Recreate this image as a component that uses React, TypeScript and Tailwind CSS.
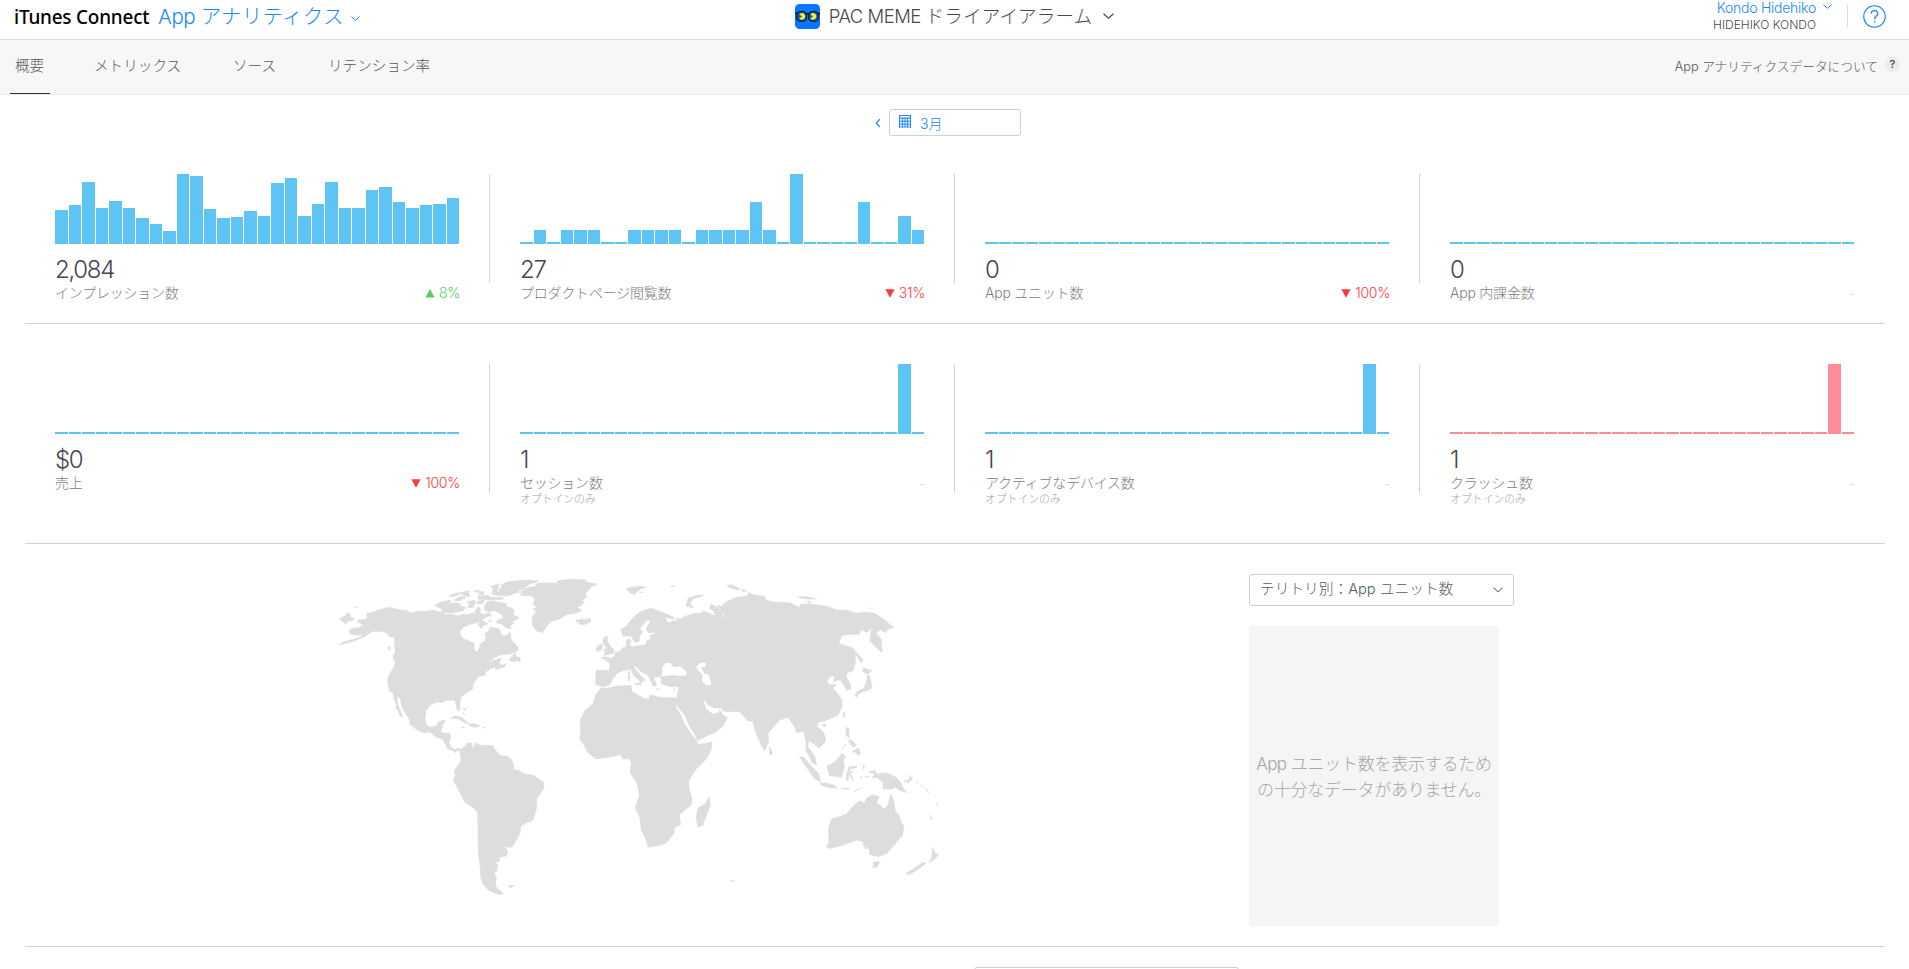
import React from "react";

const jp = "font-['Inter','Noto_Sans_CJK_JP',sans-serif] font-light";

const impressions = [34, 39, 62, 36, 43, 36, 26, 20, 13, 70, 68, 35, 26, 27, 33, 28, 61, 66, 28, 40, 62, 36, 36, 54, 57, 42, 36, 39, 40, 46];
const pageViews = [2, 14, 2, 14, 14, 14, 2, 2, 14, 14, 14, 14, 2, 14, 14, 14, 14, 42, 14, 2, 70, 2, 2, 2, 2, 42, 2, 2, 28, 14];
const flat = Array<number>(30).fill(2);
const spike = flat.map((v, i) => (i === 28 ? 70 : v));

type Metric = {
  value: string;
  label: string;
  note?: string;
  bars: number[];
  change?: { dir: "up" | "down"; text: string };
  red?: boolean;
};

const rowOne: Metric[] = [
  { value: "2,084", label: "インプレッション数", bars: impressions, change: { dir: "up", text: "8%" } },
  { value: "27", label: "プロダクトページ閲覧数", bars: pageViews, change: { dir: "down", text: "31%" } },
  { value: "0", label: "App ユニット数", bars: flat, change: { dir: "down", text: "100%" } },
  { value: "0", label: "App 内課金数", bars: flat },
];

const rowTwo: Metric[] = [
  { value: "$0", label: "売上", bars: flat, change: { dir: "down", text: "100%" } },
  { value: "1", label: "セッション数", note: "オプトインのみ", bars: spike },
  { value: "1", label: "アクティブなデバイス数", note: "オプトインのみ", bars: spike },
  { value: "1", label: "クラッシュ数", note: "オプトインのみ", bars: spike, red: true },
];

function Chevron({ className, w = 10 }: { className?: string; w?: number }) {
  return (
    <svg width={w} height={w * 0.6} viewBox="0 0 10 6" fill="none" stroke="currentColor" strokeWidth="1.1" className={className}>
      <path d="M0.5 0.7 L5 4.8 L9.5 0.7" />
    </svg>
  );
}

function BarChart({ bars, red }: { bars: number[]; red?: boolean }) {
  return (
    <svg width="404" height="70" viewBox="0 0 404 70" shapeRendering="crispEdges" className={red ? "block fill-[#fc8d98]" : "block fill-[#5ec4f3]"}>
      {bars.map((h, i) => (
        <rect key={i} x={Math.ceil(i * 13.5)} y={70 - h} width={i % 2 ? 12 : 13} height={h} />
      ))}
    </svg>
  );
}

function MetricCard({ m, last, tall }: { m: Metric; last: boolean; tall?: boolean }) {
  return (
    <div className="flex w-[465px] shrink-0 justify-between pl-[30px]">
      <div className="w-[404px]">
        <BarChart bars={m.bars} red={m.red} />
        <div className="mt-3 h-[27px] text-[24px] leading-7 tracking-[-1.3px] text-[#43474d]">{m.value}</div>
        <div className="flex h-5 items-center justify-between text-[14px] leading-5 text-[#808080]">
          <span className="whitespace-nowrap tracking-[-0.22px]">{m.label}</span>
          {m.change ? (
            <span className={m.change.dir === "up" ? "-mr-px flex items-center gap-1 text-[#4fd163]" : "-mr-px flex items-center gap-1 text-[#fb3b3b]"}>
              <svg width="10" height="9" viewBox="0 0 10 9" fill="currentColor">
                <path d={m.change.dir === "up" ? "M5 0 L9.6 8.6 H0.4 Z" : "M0.4 0.2 H9.6 L5 8.8 Z"} />
              </svg>
              <span className="tracking-[-0.3px]">{m.change.text}</span>
            </span>
          ) : (
            <span className="font-['Liberation_Sans',sans-serif] text-[11px] text-[#d0d0d0]">-</span>
          )}
        </div>
        {m.note && <div className="h-3 text-[11px] leading-3 tracking-[-0.2px] text-[#a6a6a6]">{m.note}</div>}
      </div>
      {!last && <div className={tall ? "h-[129px] w-px bg-[#d3d3d3]" : "h-[109px] w-px bg-[#d3d3d3]"} />}
    </div>
  );
}

const americas = [
  "M27 254 L45 244 L70 238 L92 230 L100 222 L85 226 L62 222 L57 212 L64 205 L85 204 L100 194 L82 186 L84 180 L106 178 L112 172 L110 160 L130 156 L150 148 L178 142 L208 149 L228 151 L245 158 L268 153 L292 154 L308 150 L320 154 L340 158 L345 163 L362 162 L385 168 L400 162 L412 164 L430 158 L436 166 L436 150 L444 140 L452 146 L450 158 L460 164 L476 158 L486 166 L468 172 L456 180 L442 188 L420 193 L400 202 L390 214 L392 228 L402 237 L418 243 L433 250 L432 265 L437 277 L446 270 L450 252 L464 244 L468 234 L463 222 L476 212 L480 202 L497 204 L508 206 L512 218 L520 228 L532 226 L540 216 L544 240 L556 252 L565 264 L562 274 L540 282 L514 284 L496 292 L474 308 L490 302 L505 296 L514 296 L508 308 L516 316 L528 310 L524 320 L498 329 L494 320 L480 328 L466 336 L466 345 L446 350 L440 358 L430 370 L428 388 L408 400 L392 412 L390 430 L390 448 L386 455 L380 448 L376 424 L368 420 L345 422 L338 428 L322 426 L300 436 L288 452 L285 478 L290 496 L302 502 L318 498 L328 484 L347 480 L340 492 L332 516 L346 520 L358 519 L362 530 L357 550 L364 562 L374 568 L386 564 L392 568 L406 558 L410 550 L424 548 L430 566 L436 548 L448 554 L462 556 L488 556 L494 568 L510 586 L530 588 L544 598 L552 616 L550 628 L568 632 L586 642 L610 646 L626 656 L640 666 L642 684 L632 700 L620 718 L620 744 L612 772 L606 784 L588 788 L572 800 L570 820 L558 842 L546 862 L534 862 L522 858 L534 874 L530 888 L508 892 L510 904 L496 906 L504 916 L500 934 L492 940 L500 952 L496 970 L500 984 L520 1000 L508 1004 L490 998 L472 988 L458 970 L452 950 L450 918 L446 890 L444 850 L444 800 L442 756 L430 744 L404 726 L392 702 L378 676 L369 660 L376 646 L372 632 L388 612 L393 600 L390 576 L384 570 L376 578 L368 572 L352 566 L346 552 L338 538 L318 532 L308 522 L298 516 L284 520 L262 510 L238 492 L240 480 L226 460 L216 440 L210 414 L202 412 L202 425 L210 450 L218 468 L212 470 L204 452 L196 442 L200 434 L192 420 L190 400 L178 392 L172 360 L180 340 L192 322 L196 306 L188 290 L195 280 L193 232 L178 230 L170 218 L148 214 L128 214 L100 232 L64 246 L36 253Z",
  "M28 178 L40 170 L55 158 L62 164 L58 170 L72 174 L68 182 L54 184 L48 192 L36 184Z",
  "M74 142 L84 141 L82 144Z",
  "M112 212 L128 210 L124 216 L110 222Z",
  "M174 262 L180 258 L181 270 L176 272Z",
  "M188 282 L200 288 L208 294 L206 304 L200 296Z",
  "M312 138 L330 126 L360 120 L364 126 L344 134 L366 130 L386 128 L396 140 L406 142 L402 150 L394 154 L370 158 L340 158 L332 152 L342 148 L326 144 L322 138Z",
  "M356 108 L382 98 L392 102 L376 108 L362 110Z",
  "M380 114 L398 108 L408 112 L390 122 L372 122Z",
  "M388 98 L418 92 L416 100 L420 110 L402 106Z",
  "M410 126 L434 120 L436 130 L428 144 L412 142 L418 134Z",
  "M440 124 L462 120 L460 130 L442 132Z",
  "M430 92 L450 90 L442 98Z M448 96 L462 94 L462 103 L446 104Z",
  "M444 108 L476 106 L480 112 L520 112 L518 118 L480 120 L446 118Z",
  "M482 80 L500 74 L510 72 L506 78 L500 96 L486 94 L490 86Z",
  "M462 140 L470 126 L490 122 L510 128 L528 130 L530 140 L546 144 L554 152 L550 164 L566 172 L560 180 L546 184 L552 190 L540 198 L544 206 L530 204 L518 194 L498 188 L504 178 L520 176 L516 164 L494 152 L476 156 L464 150Z",
  "M444 192 L456 180 L466 186 L474 192 L458 198 L454 206Z",
  "M476 180 L486 182 L480 186Z",
  "M486 98 L510 94 L506 88 L516 82 L514 74 L530 66 L560 62 L600 60 L628 64 L600 72 L582 84 L566 90 L560 98 L532 108 L500 106 L484 102Z",
  "M564 96 L590 90 L570 88 L620 78 L616 72 L640 68 L678 70 L684 62 L720 57 L770 60 L766 66 L802 72 L784 80 L778 90 L766 98 L770 112 L752 122 L764 124 L756 134 L742 142 L756 150 L742 158 L710 164 L688 178 L664 184 L648 200 L638 218 L618 212 L608 196 L606 170 L620 154 L608 148 L622 142 L610 134 L614 118 L604 108 L568 106 L580 100Z",
  "M738 178 L746 182 L750 176 L762 180 L780 174 L784 184 L764 194 L746 192 L748 186 L738 186Z",
  "M536 300 L556 278 L558 290 L570 292 L571 307 L562 302 L552 305Z",
  "M360 476 L376 468 L396 472 L406 482 L418 490 L406 490 L392 480 L374 474Z",
  "M414 494 L430 490 L450 498 L434 502 L426 500Z M394 501 L405 502 L398 505Z M458 501 L467 502 L460 505Z",
  "M398 444 L408 446 L406 452Z M400 455 L404 464 L401 464Z",
  "M536 976 L552 977 L548 981 L538 984Z",
];

const oldWorld = [
  "M122 294 L134 290 L146 292 L150 296 L162 290 L166 278 L182 272 L186 264 L200 260 L198 240 L208 236 L214 244 L208 250 L214 260 L232 258 L256 254 L262 240 L272 238 L270 226 L296 218 L264 218 L258 206 L272 184 L260 180 L240 206 L248 216 L240 226 L238 244 L224 248 L214 228 L188 228 L182 208 L200 198 L220 172 L240 156 L272 144 L290 150 L320 162 L342 172 L340 178 L314 172 L324 190 L340 182 L352 184 L346 174 L362 178 L372 170 L396 162 L426 158 L430 152 L466 168 L460 152 L448 146 L452 132 L470 140 L486 156 L490 176 L492 162 L480 148 L472 136 L498 142 L486 136 L498 126 L530 112 L560 108 L566 98 L580 104 L612 108 L618 120 L640 126 L690 128 L716 142 L722 132 L754 132 L800 138 L830 150 L860 150 L890 160 L912 156 L944 160 L972 178 L990 194 L1002 202 L984 208 L978 218 L960 210 L948 218 L964 238 L967 278 L950 264 L930 242 L934 204 L920 218 L904 208 L900 222 L846 226 L836 250 L860 258 L874 262 L886 280 L886 306 L880 332 L862 338 L858 352 L870 368 L873 388 L860 390 L850 372 L842 362 L830 360 L820 368 L824 350 L814 348 L800 362 L808 374 L830 374 L818 384 L836 404 L847 422 L846 440 L834 466 L810 476 L794 484 L776 486 L770 498 L790 516 L796 530 L796 546 L776 566 L762 552 L746 542 L744 560 L752 572 L764 588 L770 616 L756 608 L748 590 L737 570 L738 544 L730 514 L710 518 L704 500 L684 472 L660 480 L640 502 L624 520 L626 546 L614 572 L604 556 L584 510 L578 484 L564 484 L540 456 L490 454 L484 444 L462 444 L444 436 L436 422 L430 424 L440 448 L458 462 L472 460 L480 450 L488 464 L502 474 L490 498 L464 518 L440 528 L412 542 L406 526 L388 498 L376 468 L354 440 L354 426 L350 440 L342 424 L348 442 L362 464 L374 492 L388 514 L408 540 L414 554 L456 546 L454 568 L440 596 L406 630 L386 664 L388 690 L396 712 L394 734 L358 764 L362 794 L344 802 L342 820 L320 848 L300 856 L264 862 L258 840 L244 810 L240 776 L226 744 L238 706 L232 672 L210 638 L214 606 L206 596 L190 598 L180 584 L146 592 L108 597 L82 576 L74 558 L58 536 L62 520 L60 482 L74 452 L100 430 L106 406 L124 382 L132 386 L170 378 L214 376 L216 394 L250 414 L266 418 L270 404 L300 412 L350 414 L357 380 L330 380 L304 372 L302 350 L340 346 L380 346 L380 336 L362 320 L340 316 L326 308 L314 316 L306 340 L300 350 L282 352 L290 376 L280 380 L264 346 L244 336 L226 318 L222 322 L238 342 L256 360 L246 364 L242 376 L236 372 L240 362 L222 348 L212 328 L188 332 L172 340 L156 360 L150 374 L130 380 L106 374 L108 330 L146 332 L150 312 L134 298Z",
  "M130 272 L140 264 L130 252 L128 240 L136 228 L144 232 L142 244 L154 262 L164 270 L160 280 L144 284 L130 286 L136 278Z",
  "M108 274 L112 258 L126 252 L128 262 L122 272Z",
  "M198 86 L212 82 L240 78 L260 82 L240 88 L222 104 L210 98Z M238 96 L250 96 L244 99Z",
  "M330 79 L346 77 L340 81Z",
  "M378 138 L384 114 L408 106 L430 104 L428 108 L400 116 L390 130 L400 144Z",
  "M500 76 L516 74 L540 86 L532 90 L510 84Z M544 88 L562 92 L550 96Z",
  "M712 110 L740 110 L770 116 L750 118 L722 114Z M742 124 L756 126 L744 130Z",
  "M926 143 L932 145 L928 147Z",
  "M204 336 L209 334 L209 344 L205 344Z M204 348 L210 348 L209 362 L204 362Z M222 370 L236 370 L234 376Z M288 386 L302 388 L292 389Z M338 388 L346 386 L342 392Z",
  "M876 262 L892 280 L908 298 L906 310 L896 298 L886 280Z",
  "M910 322 L922 328 L936 330 L926 342 L914 338 L908 334Z",
  "M922 342 L930 350 L936 384 L922 392 L906 396 L892 404 L890 414 L884 404 L892 394 L910 386 L916 374 L920 364Z",
  "M848 462 L854 454 L854 474Z M786 494 L798 492 L794 502Z M628 560 L636 572 L636 584 L628 584Z",
  "M858 502 L868 506 L866 524 L870 536 L858 526Z M864 540 L878 542 L890 556 L882 562 L870 552Z M876 574 L896 564 L901 578 L896 588 L888 578Z M846 568 L858 552 L856 558Z",
  "M718 590 L732 592 L750 614 L776 640 L782 666 L764 656 L744 628Z",
  "M780 668 L800 670 L820 674 L834 684 L812 684 L784 676Z M844 684 L870 686 L856 688Z M882 696 L904 684 L888 690Z",
  "M800 618 L812 614 L828 602 L846 580 L858 592 L850 600 L854 620 L844 652 L808 646Z",
  "M862 632 L868 620 L892 618 L888 624 L868 628 L868 636 L880 632 L872 642 L882 664 L872 652 L866 644 L864 664 L858 656Z",
  "M908 612 L914 618 L910 630Z M900 650 L908 651 L902 653Z M914 648 L928 649 L920 651Z",
  "M926 636 L944 630 L950 642 L966 640 L980 638 L1012 654 L1024 670 L1030 686 L1042 698 L1020 692 L1006 682 L994 688 L968 686 L970 668 L950 652 L936 654 L944 642Z",
  "M1030 664 L1050 658 L1046 646 L1058 656 L1046 668Z M1068 664 L1074 670 L1070 668Z M1080 674 L1090 680 L1084 678Z M1096 682 L1108 700 L1098 690Z M1130 728 L1134 740 L1131 736Z M1106 764 L1118 778 L1112 776Z",
  "M798 858 L806 850 L806 802 L814 778 L860 762 L874 744 L898 722 L914 728 L920 714 L936 704 L958 710 L950 728 L974 748 L984 734 L992 702 L1002 724 L1006 754 L1018 766 L1022 784 L1032 800 L1028 826 L1008 848 L982 880 L958 890 L930 884 L926 864 L914 866 L926 852 L912 862 L908 846 L890 840 L848 856 L808 866Z",
  "M940 906 L960 906 L952 920 L940 924Z",
  "M1118 862 L1126 880 L1136 884 L1118 902 L1106 908 L1116 890Z",
  "M1038 940 L1060 926 L1090 906 L1098 910 L1072 930 L1048 944Z",
  "M514 960 L524 962 L514 966Z",
  "M408 772 L414 744 L436 732 L446 710 L452 732 L440 766 L428 796 L414 802Z",
];

const caspian = "M408 322 L420 308 L438 308 L436 320 L424 322 L432 340 L446 344 L450 356 L454 376 L438 376 L426 362 L428 346 L416 332Z";
const blackSea = "M308 342 L306 322 L316 310 L332 310 L344 320 L362 320 L380 336 L378 346 L354 348 L338 340 L318 344Z";

function WorldMap() {
  return (
    <svg width="620" height="350" viewBox="0 0 1860 1050" className="block fill-[#dddddd] stroke-[#dddddd]" strokeWidth="1.5">
      {americas.map((d) => (
        <path key={d} d={d} />
      ))}
      <g transform="translate(690 0)">
        {oldWorld.map((d) => (
          <path key={d} d={d} />
        ))}
        <path d={caspian} className="fill-white stroke-none" />
        <path d={blackSea} className="fill-white stroke-none" />
        <path d="M332 316 L344 316 L346 308 L364 306 L356 318 L342 321Z" />
      </g>
    </svg>
  );
}

function AppIcon() {
  return (
    <svg width="25" height="25" viewBox="0 0 25 25">
      <rect width="25" height="25" rx="4.5" fill="#0a75fb" />
      <g fill="#0b5fd0" stroke="#101820" strokeWidth="1.3">
        <rect x="1.7" y="7.6" width="9.6" height="9.6" rx="3.8" />
        <rect x="13.7" y="7.6" width="9.6" height="9.6" rx="3.8" />
        <path d="M0 9.5 H2 M11 10.5 Q12.5 9 14 10.5 M23 9.5 H25" fill="none" />
      </g>
      <path d="M7 12.4 L4.4 10.4 A3.3 3.3 0 1 1 4.4 14.4 Z M18 12.4 L15.4 10.4 A3.3 3.3 0 1 1 15.4 14.4 Z" fill="#f3f01c" />
    </svg>
  );
}

function CalendarIcon() {
  return (
    <svg width="12" height="13" viewBox="0 0 12 13" fill="none" stroke="#1a86fb">
      <path d="M0 0.5 H12 M0 3.2 H12" strokeWidth="1.2" />
      <path d="M0.5 0 V12.5 M11.5 0 V12.5 M0 12 H12 M3.4 3 V12 M6 3 V12 M8.6 3 V12 M0 6.2 H12 M0 9.2 H12" />
    </svg>
  );
}

export default function App() {
  return (
    <div className={`h-[969px] w-[1909px] overflow-hidden bg-white ${jp}`}>
      <header className="flex h-10 justify-between border-b border-[#dcdcdc]">
        <div className="flex w-[600px] pl-[14px]">
          <div className="h-[34px] w-[135px] whitespace-nowrap">
            <span className="inline-block origin-left scale-x-[0.995] font-['Noto_Sans',sans-serif] text-[19px] leading-[34px] font-medium tracking-[-0.2px] text-black">iTunes Connect</span>
          </div>
          <div className="flex items-start pl-[9px] text-[#1a86fb]">
            <span className="text-[20.5px] leading-[33px] tracking-[0.25px] whitespace-nowrap">
              <span className="tracking-[-0.4px]">App </span>アナリティクス
            </span>
            <Chevron className="mt-[16px] ml-[7px]" w={9} />
          </div>
        </div>
        <div className="flex items-start pt-1">
          <AppIcon />
          <span className="ml-[9px] text-[18.5px] leading-[25px] tracking-[0.2px] whitespace-nowrap text-[#494949]">
            <span className="tracking-[-0.5px]">PAC MEME </span>ドライアイアラーム
          </span>
          <Chevron className="mt-[9px] ml-[11px] text-[#494949]" w={11} />
        </div>
        <div className="flex w-[600px] items-start justify-end pr-[23px]">
          <div className="text-right whitespace-nowrap">
            <div className="text-[14px] leading-4 tracking-[-0.25px] text-[#1a86fb]">Kondo Hidehiko</div>
            <div className="text-[12px] leading-[17px] text-[#494949]">HIDEHIKO KONDO</div>
          </div>
          <Chevron className="mt-1 ml-[7px] text-[#1a86fb]" w={9} />
          <div className="mt-[5px] ml-[15px] h-[22px] w-px bg-[#dcdcdc]" />
          <svg width="23" height="23" viewBox="0 0 23 23" className="mt-[5px] ml-[15px]" fill="none" stroke="#1a86fb">
            <circle cx="11.5" cy="11.5" r="10.8" strokeWidth="1.1" />
            <path d="M8.2 8.6 C8.2 4.6 14.8 4.6 14.8 8.4 C14.8 10.9 11.6 11 11.6 14.2" strokeWidth="1.4" />
            <circle cx="11.6" cy="16.8" r="0.5" />
          </svg>
        </div>
      </header>

      <nav className="flex h-[55px] justify-between border-b border-[#e8e8e8] bg-[#f7f7f7] text-[14.6px] text-[#575757]">
        <div className="flex">
          <div className="ml-[10px] flex h-[54px] w-10 border-b border-[#333333] pl-[5px] leading-[52px]">概要</div>
          <div className="ml-[44px] w-[139px] leading-[52px]">メトリックス</div>
          <div className="w-[95px] leading-[52px]">ソース</div>
          <div className="leading-[52px]">リテンション率</div>
        </div>
        <div className="flex items-start pr-[9px]">
          <span className="text-[12.7px] leading-[53px]">App アナリティクスデータについて</span>
          <span className="mt-[17px] ml-[7px] flex h-[15px] w-[15px] items-center justify-center rounded-full bg-[#ececee] text-[11px] font-medium text-[#444444]">?</span>
        </div>
      </nav>

      <div className="flex h-[79px] items-start pt-[14px] pl-[875px]">
        <svg width="6" height="10" viewBox="0 0 6 10" className="mt-[9px]" fill="none" stroke="#1a86fb" strokeWidth="1.3">
          <path d="M4.8 1.2 L1.5 5.2 L4.8 9.2" />
        </svg>
        <div className="ml-2 flex h-[27px] w-[132px] items-start rounded-[3px] border border-[#d0d0d0] pt-[5px] pl-[9px]">
          <CalendarIcon />
          <span className="mt-[-1px] ml-[9px] text-[14px] leading-5 text-[#1a86fb]">3月</span>
        </div>
      </div>

      <main className="mr-6 ml-[25px]">
        <section className="flex h-[150px] border-b border-[#d3d3d3]">
          {rowOne.map((m, i) => (
            <MetricCard key={i} m={m} last={i === 3} />
          ))}
        </section>
        <section className="flex h-[220px] border-b border-[#d3d3d3] pt-10">
          {rowTwo.map((m, i) => (
            <MetricCard key={i} m={m} last={i === 3} tall />
          ))}
        </section>
        <section className="flex h-[403px] border-b border-[#d3d3d3] pl-[305px]">
          <div className="w-[919px] pt-4">
            <WorldMap />
          </div>
          <div className="pt-[30px]">
            <div className="flex h-8 w-[265px] items-start justify-between rounded-[3px] border border-[#cfcfcf] pr-[10px] pl-[10px] text-[#555a60]">
              <span className="text-[14.7px] leading-[28px]">テリトリ別：App ユニット数</span>
              <Chevron className="mt-3 text-[#777777]" w={10} />
            </div>
            <div className="mt-5 flex h-[300px] w-[250px] items-center justify-center bg-[#f5f5f5] pt-px text-center text-[17px] leading-[26px] tracking-[-0.25px] whitespace-nowrap text-[#a5a5a5]">
              <div>
                <span className="tracking-[-0.6px]">App </span>ユニット数を表示するため
                <br />
                の十分なデータがありません。
              </div>
            </div>
          </div>
        </section>
        <div className="mt-5 ml-[949px] h-8 w-[265px] rounded-[3px] border border-[#cfcfcf]" />
      </main>
    </div>
  );
}
